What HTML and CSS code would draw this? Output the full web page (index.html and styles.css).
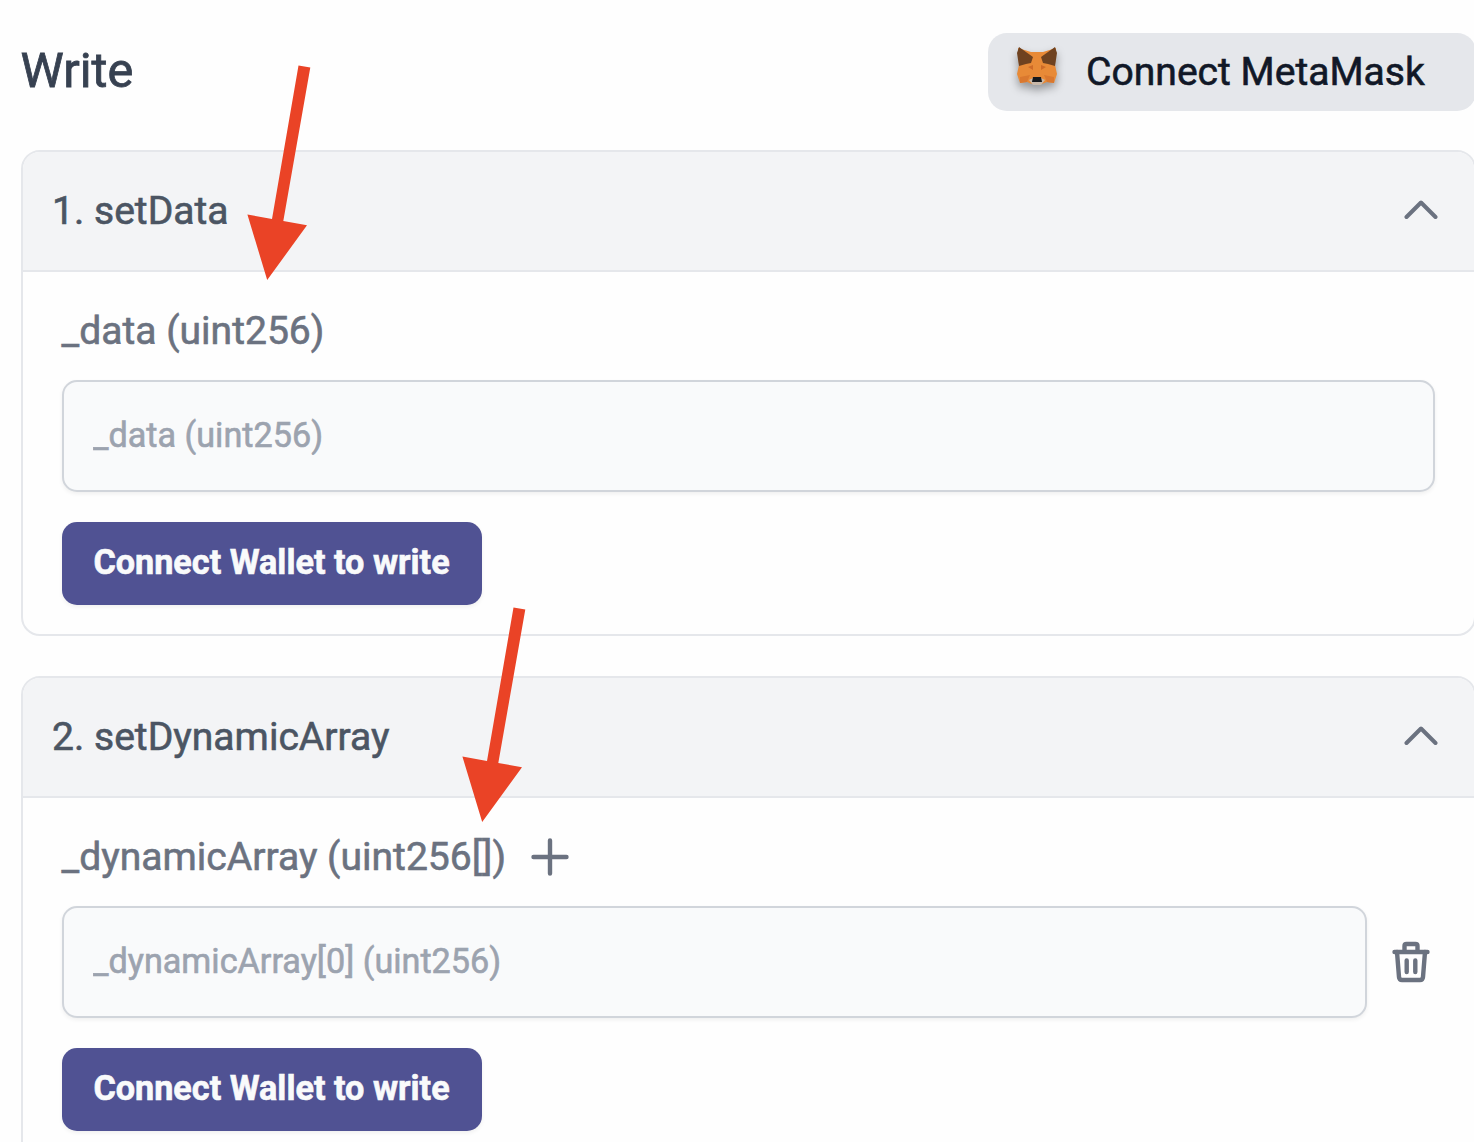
FILE: index.html
```html
<!DOCTYPE html>
<html lang="en">
<head>
<meta charset="utf-8">
<title>Write contract</title>
<link rel="stylesheet" href="styles.css">
</head>
<body>
<main class="page">
  <header class="topbar">
    <h1 class="title">Write</h1>
    <button class="connect">
      <svg class="fox" viewBox="0 0 42 40">
        <path fill="#e88a37" d="M2 1 L15 5 H27 L40 1 L39 18 L41 27 L38 36 L31 35 L26 37 H16 L11 35 L4 36 L1 27 L3 18 Z"/>
        <path fill="#6f4220" d="M3 0 L17 10 L15 16 L10 17 L3 19 L1 6 Z M39 0 L25 10 L27 16 L32 17 L39 19 L41 6 Z"/>
        <path fill="#ce6b28" d="M12 20 L17 18 V23 Z M30 20 L25 18 V23 Z"/>
        <path fill="#da782f" d="M4 30 L14 28 L11 35 L4 36 Z M38 30 L28 28 L31 35 L38 36 Z"/>
        <path fill="#c9b9aa" d="M13 33 L17 31 H25 L29 33 L25 38 H17 Z"/>
        <path fill="#17191c" d="M17 30 H25 L26 35 H16 Z"/>
      </svg>
      <span class="connect-text">Connect MetaMask</span>
    </button>
  </header>

  <section class="card">
    <div class="card-head">
      <h2 class="card-title">1. setData</h2>
      <svg class="chevron" viewBox="0 0 34 20"><path d="M2.500 17 L17 2.500 L31.500 17"/></svg>
    </div>
    <div class="card-body">
      <div class="label-row"><label class="label" for="data">_data (uint256)</label></div>
      <div class="field-row"><input class="field" id="data" placeholder="_data (uint256)"></div>
      <button class="submit"><span class="submit-text">Connect Wallet to write</span></button>
    </div>
  </section>

  <section class="card card-open">
    <div class="card-head">
      <h2 class="card-title">2. setDynamicArray</h2>
      <svg class="chevron" viewBox="0 0 34 20"><path d="M2.500 17 L17 2.500 L31.500 17"/></svg>
    </div>
    <div class="card-body">
      <div class="label-row">
        <label class="label" for="item">_dynamicArray (uint256[])</label>
        <svg class="plus" viewBox="0 0 38 38"><path d="M19 2.500 V35.500 M2.500 19 H35.500"/></svg>
      </div>
      <div class="field-row">
        <input class="field" id="item" placeholder="_dynamicArray[0] (uint256)">
        <svg class="trash" viewBox="0 0 38 42"><path d="M2.500 11 H35.500 M12.500 10 V5 Q12.500 3 14.500 3 H23.500 Q25.500 3 25.500 5 V10"/><path d="M5 11 L7 36 Q7.300 39 10 39 H28 Q30.700 39 31 36 L33 11"/><path d="M14.700 19.500 V31 M23.300 19.500 V31"/></svg>
      </div>
      <button class="submit"><span class="submit-text">Connect Wallet to write</span></button>
    </div>
  </section>
</main>
<svg class="arrow arrow-one" viewBox="0 0 64 216"><path d="M51.500 0.500 L63.300 2.600 L36.300 155.900 L60 160.300 L20.200 215 L0.400 149.500 L25 153.900 Z"/></svg>
<svg class="arrow arrow-two" viewBox="0 0 64 216"><path d="M51.500 0.500 L63.300 2.600 L36.300 155.900 L60 160.300 L20.200 215 L0.400 149.500 L25 153.900 Z"/></svg>
</body>
</html>
```
FILE: styles.css
```css
* { box-sizing: border-box; }
body {
  margin: 0;
  width: 1474px;
  height: 1142px;
  overflow: hidden;
  position: relative;
  background: #fefefe;
  font-family: Roboto, sans-serif;
}
h1, h2 { margin: 0; font-weight: 400; }
button, input { font-family: inherit; border: 0; margin: 0; }
.page { width: 1475.500px; height: 1142px; overflow: hidden; padding: 32.500px 0 0 20.500px; }
.topbar { display: flex; justify-content: space-between; height: 78px; margin-bottom: 39.500px; }
.title { font-size: 48.700px; line-height: 75px; color: #374151; -webkit-text-stroke: 0.8px #374151; }
.connect {
  display: flex;
  align-items: center;
  width: 487.500px;
  padding: 0 0 0 28px;
  border-radius: 19px;
  background: #e5e7eb;
  color: #111827;
}
.fox { width: 42px; height: 40px; margin: -9px 28px 0 0; filter: drop-shadow(0 5px 4px rgba(0, 0, 0, 0.35)); }
.connect-text { font-size: 39.100px; padding-top: 1px; white-space: nowrap; -webkit-text-stroke: 0.6px #111827; }
.card {
  height: 486px;
  margin-bottom: 40px;
  border: 2px solid #e5e7eb;
  border-radius: 19px;
  overflow: hidden;
}
.card-open { margin-bottom: 0; }
.card-head {
  display: flex;
  align-items: center;
  justify-content: space-between;
  height: 120px;
  padding: 0 36px 0 29.500px;
  background: #f3f4f6;
  border-bottom: 2px solid #e5e7eb;
}
.card-title { font-size: 39.100px; color: #4b5563; -webkit-text-stroke: 0.6px #4b5563; }
.chevron { width: 34px; height: 20px; margin-top: -2px; fill: none; stroke: #6b7280; stroke-width: 4; stroke-linecap: round; stroke-linejoin: round; }
.card-body { padding: 29px 39px 0; }
.label-row { display: flex; align-items: center; height: 60px; margin-bottom: 19px; }
.label { font-size: 39.100px; color: #6b7280; white-space: nowrap; -webkit-text-stroke: 0.6px #6b7280; }
.plus { width: 38px; height: 38px; margin-left: 25.300px; fill: none; stroke: #6b7280; stroke-width: 4.400; stroke-linecap: round; }
.field-row { display: flex; align-items: center; margin-bottom: 29.500px; }
.field {
  flex: 1;
  height: 112px;
  padding: 0 30px 3px 29.500px;
  border: 2px solid #d1d5db;
  border-radius: 15px;
  background: #f9fafb;
  font-size: 34.200px;
  box-shadow: 0 2px 4px rgba(0, 0, 0, 0.06);
}
.field::placeholder { color: #9ca3af; opacity: 1; -webkit-text-stroke: 0.6px #9ca3af; }
.trash { width: 38px; height: 42px; margin: 0 5px 0 25px; fill: none; stroke: #6b7280; stroke-width: 4.400; stroke-linecap: round; stroke-linejoin: round; }
.submit {
  display: block;
  width: 420px;
  height: 83px;
  padding: 0 0 3px;
  border-radius: 15px;
  background: #505293;
  color: #f9fafb;
  box-shadow: 0 2px 4px rgba(0, 0, 0, 0.06);
}
.submit-text { font-size: 34.200px; font-weight: 700; white-space: nowrap; -webkit-text-stroke: 0.6px #f9fafb; }
.arrow { position: absolute; width: 64px; height: 216px; fill: #ea4326; }
.arrow-one { left: 247px; top: 65px; }
.arrow-two { left: 462px; top: 607px; }
```
